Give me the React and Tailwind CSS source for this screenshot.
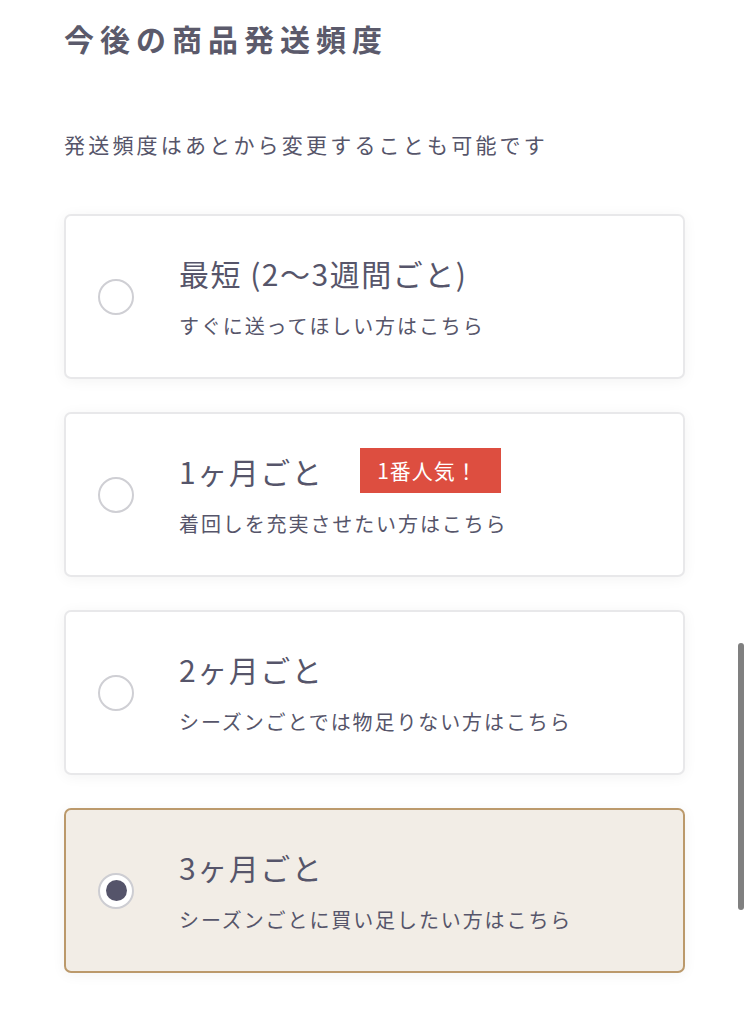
import React from "react";

const options = [
  { title: "最短 (2〜3週間ごと)", sub: "すぐに送ってほしい方はこちら", badge: false, selected: false },
  { title: "1ヶ月ごと", sub: "着回しを充実させたい方はこちら", badge: true, selected: false },
  { title: "2ヶ月ごと", sub: "シーズンごとでは物足りない方はこちら", badge: false, selected: false },
  { title: "3ヶ月ごと", sub: "シーズンごとに買い足したい方はこちら", badge: false, selected: true },
];

function Radio({ selected }) {
  if (selected) {
    return (
      <div className="w-[36px] h-[36px] rounded-full border-2 border-[#cdcdd2] bg-white flex items-center justify-center shrink-0">
        <div className="w-[21px] h-[21px] rounded-full bg-[#55546a]" />
      </div>
    );
  }
  return <div className="w-[36px] h-[36px] rounded-full border-2 border-[#cfcfd4] bg-white shrink-0" />;
}

export default function App() {
  return (
    <div
      className="relative w-[750px] h-[1020px] bg-white text-[#56556a] overflow-hidden"
      style={{ fontFamily: '"Noto Sans CJK JP", "Noto Sans", sans-serif' }}
    >
      <div className="px-[64px] pt-[18px]">
        <h1 className="text-[30px] leading-[40px] font-bold tracking-[6px] text-[#5b5a6b]">今後の商品発送頻度</h1>
        <p className="mt-[71px] text-[21px] leading-[30px] tracking-[3.2px]">発送頻度はあとから変更することも可能です</p>
        <div className="mt-[55px] flex flex-col gap-[33px] w-[621px]">
          {options.map((o, i) => (
            <div
              key={i}
              className={
                o.selected
                  ? "h-[165px] rounded-[7px] border-2 border-[#bb996b] bg-[#f2ede6] flex items-center pl-[32px] shadow-[0_2px_14px_rgba(0,0,0,0.05)]"
                  : "h-[165px] rounded-[7px] border-2 border-[#e8e8ea] bg-white flex items-center pl-[32px] shadow-[0_2px_14px_rgba(0,0,0,0.05)]"
              }
            >
              <Radio selected={o.selected} />
              <div className="ml-[45px] flex flex-col">
                <div className="flex items-center h-[40px]">
                  <span className="text-[30px] leading-[40px] tracking-[1.5px]">{o.title}</span>
                  {o.badge && (
                    <span className="ml-[37px] w-[141px] h-[45px] bg-[#dd4e40] text-white text-[21px] leading-[45px] tracking-[1px] pl-[17px]">
                      1番人気！
                    </span>
                  )}
                </div>
                <div className="mt-[18px] text-[20px] leading-[30px] tracking-[1.9px]">{o.sub}</div>
              </div>
            </div>
          ))}
        </div>
      </div>
      <div className="absolute left-[738px] top-[643px] w-[6px] h-[267px] rounded-full bg-[#808080]" />
    </div>
  );
}
